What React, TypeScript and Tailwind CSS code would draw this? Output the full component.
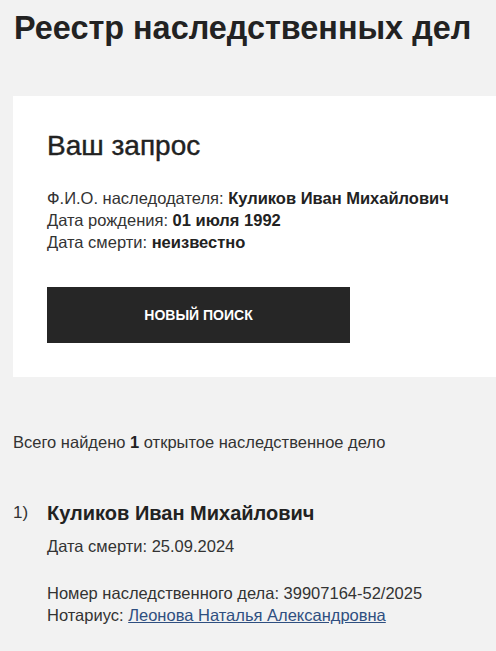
import React from "react";

const font = { fontFamily: '"Liberation Sans", Arial, sans-serif' };

const App = () => {
  return (
    <div className="min-h-[651px] bg-[#f2f2f2] text-[#222]" style={font}>
      <div className="pl-[14px] pt-[9px]">
        <h1 className="text-[32.4px] font-bold leading-[38px]">Реестр наследственных дел</h1>
      </div>

      {/* Request card */}
      <div className="ml-[13px] mt-[49px] bg-white pl-[34px] pt-[33px] pb-[34px]">
        <h2 className="text-[28px] leading-[34px] [-webkit-text-stroke:0.4px_#222]">Ваш запрос</h2>
        <div className="mt-[24px] text-[16.5px] leading-[22px] text-[#333]">
          <p>
            Ф.И.О. наследодателя: <b className="text-[#222]">Куликов Иван Михайлович</b>
          </p>
          <p>
            Дата рождения: <b className="text-[#222]">01 июля 1992</b>
          </p>
          <p>
            Дата смерти: <b className="text-[#222]">неизвестно</b>
          </p>
        </div>
        <button className="mt-[34px] flex h-[56px] w-[303px] items-center justify-center bg-[#262626] text-[14px] font-bold text-white">
          НОВЫЙ ПОИСК
        </button>
      </div>

      {/* Results */}
      <p className="mt-[54px] pl-[13px] text-[16.5px] leading-[22px] text-[#333]">
        Всего найдено <b className="text-[#222]">1</b> открытое наследственное дело
      </p>

      <div className="mt-[46px] flex pl-[13px]">
        <span className="w-[34px] text-[17px] leading-[28px] text-[#333]">1)</span>
        <div>
          <p className="text-[20px] font-bold leading-[28px]">Куликов Иван Михайлович</p>
          <p className="mt-[8px] text-[16.5px] leading-[22px] text-[#333]">Дата смерти: 25.09.2024</p>
          <div className="mt-[25px] text-[16.5px] leading-[22px] text-[#333]">
            <p>Номер наследственного дела: 39907164-52/2025</p>
            <p>
              Нотариус:{" "}
              <a href="#" className="text-[#2f4f80] underline">
                Леонова Наталья Александровна
              </a>
            </p>
          </div>
        </div>
      </div>
    </div>
  );
};

export default App;
